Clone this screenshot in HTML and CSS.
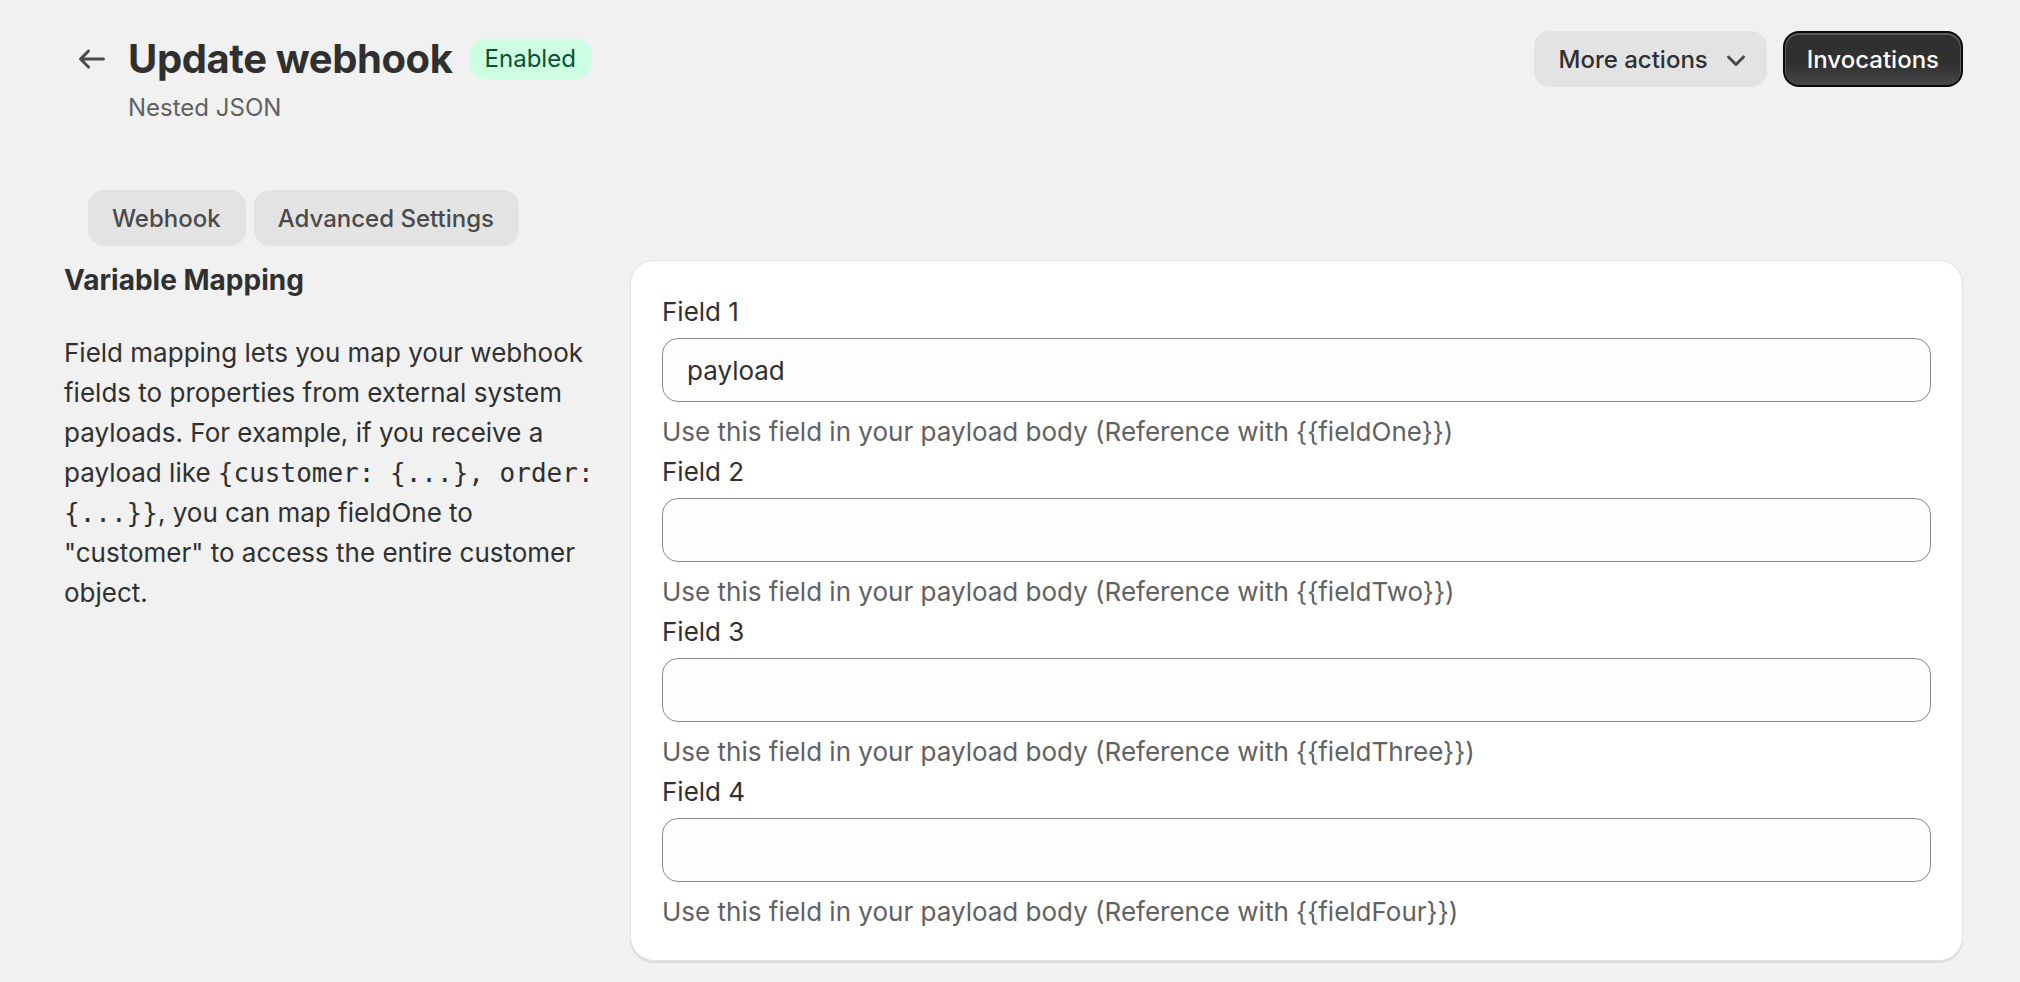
FILE: index.html
```html
<!DOCTYPE html>
<html lang="en">

<head>
    <meta charset="UTF-8">
    <meta name="viewport" content="width=device-width, initial-scale=1.0">
    <title>Update webhook</title>
    <link rel="stylesheet" href="styles.css">
</head>

<body>
    <div class="page">
        <header class="page-header">
            <div class="title-area">
                <button class="back-btn" type="button" aria-label="Back">
                    <svg viewBox="0 0 20 20" width="40" height="40">
                        <path d="M16.5 10a.75.75 0 0 1-.75.75h-9.69l2.72 2.72a.75.75 0 1 1-1.06 1.06l-4-4a.75.75 0 0 1 0-1.06l4-4a.75.75 0 0 1 1.06 1.06l-2.72 2.72h9.69a.75.75 0 0 1 .75.75Z" />
                    </svg>
                </button>
                <div class="title-stack">
                    <div class="title-row">
                        <h1 class="page-title">Update webhook</h1>
                        <span class="badge">Enabled</span>
                    </div>
                    <p class="subtitle">Nested JSON</p>
                </div>
            </div>
            <div class="actions">
                <button class="btn btn-secondary" type="button">
                    More actions
                    <svg viewBox="0 0 20 20" width="40" height="40">
                        <path d="M5.72 8.47a.75.75 0 0 1 1.06 0l3.22 3.22 3.22-3.22a.75.75 0 1 1 1.06 1.06l-3.75 3.75a.75.75 0 0 1-1.06 0l-3.75-3.75a.75.75 0 0 1 0-1.06Z" />
                    </svg>
                </button>
                <button class="btn btn-primary" type="button">Invocations</button>
            </div>
        </header>

        <nav class="tabs">
            <button class="tab" type="button">Webhook</button>
            <button class="tab" type="button">Advanced Settings</button>
        </nav>

        <section class="layout">
            <div class="annotation">
                <h2 class="section-title">Variable Mapping</h2>
                <p class="section-text">
                    Field mapping lets you map your webhook fields to properties from external system payloads. For
                    example, if you receive a payload like <code>{customer: {...}, order: {...}}</code>, you can map
                    fieldOne to "customer" to access the entire customer object.
                </p>
            </div>

            <div class="card">
                <div class="field">
                    <label class="field-label" for="f1">Field 1</label>
                    <input class="field-input" id="f1" type="text" value="payload">
                    <p class="field-help">Use this field in your payload body (Reference with {{fieldOne}})</p>
                </div>
                <div class="field">
                    <label class="field-label" for="f2">Field 2</label>
                    <input class="field-input" id="f2" type="text">
                    <p class="field-help">Use this field in your payload body (Reference with {{fieldTwo}})</p>
                </div>
                <div class="field">
                    <label class="field-label" for="f3">Field 3</label>
                    <input class="field-input" id="f3" type="text">
                    <p class="field-help">Use this field in your payload body (Reference with {{fieldThree}})</p>
                </div>
                <div class="field">
                    <label class="field-label" for="f4">Field 4</label>
                    <input class="field-input" id="f4" type="text">
                    <p class="field-help">Use this field in your payload body (Reference with {{fieldFour}})</p>
                </div>
            </div>
        </section>
    </div>
</body>

</html>
```

FILE: styles.css
```css
* {
    padding: 0;
    margin: 0;
    box-sizing: border-box;
}

html,
body {
    width: 100%;
    height: 100%;
    background-color: #f1f1f1;
    font-family: Inter, "Noto Sans", sans-serif;
    color: #303030;
    overflow: hidden;
}

button,
input {
    font-family: inherit;
}

.page {
    padding: 31px 57px 0 64px;
}

/* header */
.page-header {
    display: flex;
    justify-content: space-between;
    align-items: flex-start;
}

.title-area {
    display: flex;
    align-items: flex-start;
    gap: 8px;
}

.back-btn {
    width: 56px;
    height: 56px;
    display: flex;
    align-items: center;
    justify-content: center;
    border: none;
    background: transparent;
    fill: #4a4a4a;
}

.title-stack {
    padding-top: 4px;
}

.title-row {
    display: flex;
    align-items: center;
    gap: 16px;
}

.page-title {
    font-size: 40px;
    line-height: 48px;
    font-weight: 700;
    letter-spacing: -0.4px;
    color: #303030;
}

.badge {
    height: 40px;
    padding: 0 16px;
    border-radius: 16px;
    background-color: #cdfee1;
    color: #0c5132;
    font-size: 24px;
    line-height: 40px;
    font-weight: 400;
}

.subtitle {
    margin-top: 5px;
    font-size: 24px;
    line-height: 40px;
    color: #616161;
}

.actions {
    display: flex;
    gap: 16px;
}

.btn {
    height: 56px;
    display: flex;
    align-items: center;
    border-radius: 16px;
    font-size: 24px;
    font-weight: 500;
    cursor: pointer;
}

.btn-secondary {
    padding: 0 11px 0 24px;
    border: none;
    background-color: #e3e3e3;
    color: #303030;
}

.btn-secondary svg {
    margin-left: 8px;
    fill: #4a4a4a;
}

.btn-primary {
    padding: 0 22px;
    border: 2px solid #0a0a0a;
    color: #ffffff;
    background: linear-gradient(180deg, #303030 60%, #474747 100%);
    box-shadow: inset 0 1px 0 1px rgba(255, 255, 255, 0.22);
}

/* tabs */
.tabs {
    display: flex;
    gap: 8px;
    margin: 62px 0 0 24px;
}

.tab {
    height: 56px;
    padding: 0 25px 0 24px;
    border: none;
    border-radius: 16px;
    background-color: #e3e3e3;
    color: #4a4a4a;
    font-size: 24px;
    font-weight: 500;
}

/* annotated section */
.layout {
    display: grid;
    grid-template-columns: 535px 1fr;
    column-gap: 31px;
    align-items: start;
    margin-top: 14px;
}

.section-title {
    font-size: 28px;
    line-height: 40px;
    font-weight: 650;
}

.section-text {
    margin-top: 33px;
    font-size: 26px;
    line-height: 40px;
}

.section-text code {
    font-family: "DejaVu Sans Mono", "Liberation Mono", monospace;
    font-size: 26px;
    line-height: 1;
}

.card {
    padding: 31px 31px 28px;
    background-color: #ffffff;
    border: 1px solid #e3e3e3;
    border-radius: 24px;
    box-shadow: 0 2px 0 rgba(26, 26, 26, 0.1);
}

.field-label {
    display: block;
    font-size: 26px;
    line-height: 40px;
}

.field-input {
    display: block;
    width: 100%;
    height: 64px;
    margin-top: 6px;
    padding: 0 24px;
    border: 1px solid #8a8a8a;
    border-radius: 16px;
    background-color: #fdfdfd;
    font-size: 26px;
    color: #303030;
    outline: none;
}

.field-help {
    margin-top: 10px;
    font-size: 26px;
    line-height: 40px;
    color: #616161;
}
```
